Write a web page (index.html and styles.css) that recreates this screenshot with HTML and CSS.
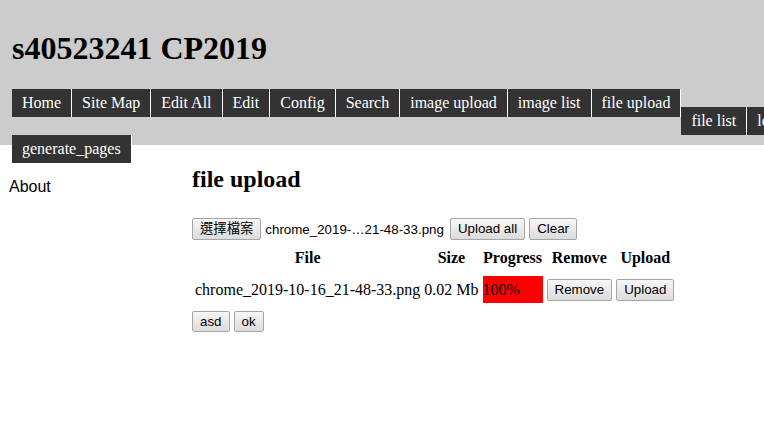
FILE: index.html
```html
<!DOCTYPE html>
<html>
<head>
<meta charset="utf-8">
<title>s40523241 CP2019</title>
<link rel="stylesheet" href="styles.css">
</head>
<body>
<header class="site-header">
  <h1 class="site-title">s40523241 CP2019</h1>
  <nav class="menu">
    <div class="menu-row">
      <a class="menu-item">Home</a>
      <a class="menu-item">Site Map</a>
      <a class="menu-item">Edit All</a>
      <a class="menu-item">Edit</a>
      <a class="menu-item">Config</a>
      <a class="menu-item">Search</a>
      <a class="menu-item">image upload</a>
      <a class="menu-item">image list</a>
      <a class="menu-item">file upload</a>
      <a class="menu-item menu-item-low">file list</a>
      <a class="menu-item menu-item-low">logout</a>
    </div>
    <div class="menu-row">
      <a class="menu-item">generate_pages</a>
    </div>
  </nav>
</header>
<div class="page">
  <aside class="sidebar">About</aside>
  <main class="content">
    <h2 class="page-title">file upload</h2>
    <div class="file-row">
      <span class="file-input"><button class="btn">選擇檔案</button><span class="file-name">chrome_2019-…21-48-33.png</span></span>
      <button class="btn">Upload all</button>
      <button class="btn">Clear</button>
    </div>
    <table class="upload-table">
      <thead>
        <tr><th>File</th><th>Size</th><th class="col-progress">Progress</th><th>Remove</th><th>Upload</th></tr>
      </thead>
      <tbody>
        <tr>
          <td>chrome_2019-10-16_21-48-33.png</td>
          <td>0.02 Mb</td>
          <td><div class="progress">100%</div></td>
          <td><button class="btn">Remove</button></td>
          <td><button class="btn">Upload</button></td>
        </tr>
      </tbody>
    </table>
    <div class="actions">
      <button class="btn">asd</button>
      <button class="btn">ok</button>
    </div>
  </main>
</div>
</body>
</html>
```

FILE: styles.css
```css
html, body {
  margin: 0;
  padding: 0;
}
body {
  font-family: "Liberation Serif", "Times New Roman", serif;
  font-size: 16px;
  color: #000;
  background: #fff;
  overflow: hidden;
}
.site-header {
  background: #cccccc;
  height: 145px;
  box-sizing: border-box;
  padding: 9px 0 0 12px;
}
.site-title {
  font-size: 32px;
  font-weight: bold;
  margin: 21.44px 0 21.8px;
  line-height: 36.8px;
}
.menu-row {
  display: flex;
  align-items: flex-start;
  overflow: hidden;
}
.menu-item {
  flex-shrink: 0;
  display: block;
  background: #333333;
  color: #fff;
  padding: 5px 10px;
  line-height: 18px;
  border-right: 1px solid #fff;
  white-space: nowrap;
}
.menu-item-low {
  margin-top: 18px;
}
.page {
  display: flex;
  align-items: flex-start;
}
.sidebar {
  width: 192px;
  flex-shrink: 0;
  box-sizing: border-box;
  padding: 33px 0 0 9px;
  font-family: "Liberation Sans", Arial, sans-serif;
  font-size: 16px;
}
.content {
  flex: 1;
}
.page-title {
  font-size: 24px;
  font-weight: bold;
  margin: 21px 0 0;
  line-height: 27.6px;
}
.btn {
  font-family: "Liberation Sans", Arial, "Noto Sans CJK TC", sans-serif;
  font-size: 13.33px;
  color: #000;
  height: 22px;
  padding: 0 7px;
  margin: 0;
  border: 1px solid #a6a6a6;
  border-radius: 2px;
  background: linear-gradient(#f7f7f7, #dcdcdc);
  box-sizing: border-box;
  line-height: 18px;
}
.file-row {
  display: flex;
  align-items: center;
  gap: 4px;
  margin-top: 24px;
  height: 23px;
}
.file-input {
  display: flex;
  align-items: center;
  gap: 4px;
  margin-right: 2px;
}
.file-name {
  font-family: "Liberation Sans", Arial, sans-serif;
  font-size: 13.33px;
}
.upload-table {
  margin-top: 5px;
  border-spacing: 2px;
}
.upload-table th {
  font-weight: bold;
  padding: 1px 1px 6px;
  text-align: center;
  line-height: 18.4px;
}
.upload-table .col-progress {
  width: 60px;
}
.upload-table td {
  padding: 1px;
  vertical-align: middle;
  white-space: nowrap;
}
.progress {
  background: #ff0000;
  height: 27px;
  line-height: 27px;
}
.actions {
  display: flex;
  gap: 4px;
  margin-top: 5px;
}
.actions .btn {
  height: 21px;
}
```
